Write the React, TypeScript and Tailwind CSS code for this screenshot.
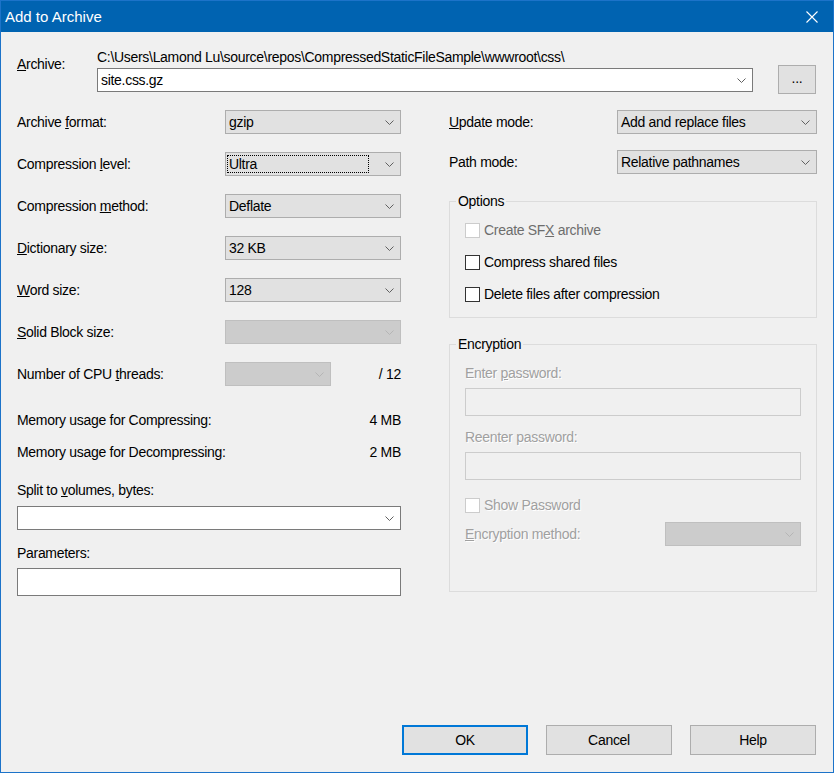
type ComboVariant = "normal" | "edit" | "disabled";

function Chevron({ color = "#606060" }: { color?: string }) {
  return (
    <svg width="9" height="5" viewBox="0 0 9 5" className="shrink-0">
      <polyline points="0.5,0.5 4.5,4.5 8.5,0.5" fill="none" stroke={color} strokeWidth="1" />
    </svg>
  );
}

function Combo({
  value = "",
  className = "",
  variant = "normal",
  focused = false,
}: {
  value?: string;
  className?: string;
  variant?: ComboVariant;
  focused?: boolean;
}) {
  const look =
    variant === "edit"
      ? "bg-white border-[#7a7a7a]"
      : variant === "disabled"
        ? "bg-[#cccccc] border-[#bfbfbf]"
        : "bg-[#e1e1e1] border-[#adadad]";
  return (
    <div className={`h-[24px] border flex items-center pr-[6px] ${look} ${className}`}>
      {focused ? (
        <div className="flex-1 h-[18px] ml-[1px] mr-[16px] border border-dotted border-black pl-[1px] flex items-center">
          {value}
        </div>
      ) : (
        <div className="flex-1 pl-[3px] truncate">{value}</div>
      )}
      <Chevron color={variant === "disabled" ? "#b5b5b5" : "#606060"} />
    </div>
  );
}

function Checkbox({ label, disabled = false }: { label: React.ReactNode; disabled?: boolean }) {
  return (
    <div className="h-[16px] flex items-center">
      <div
        className={`w-[15px] h-[15px] bg-white border ${disabled ? "border-[#cccccc]" : "border-[#333333]"}`}
      />
      <span className="ml-[4px]">{label}</span>
    </div>
  );
}

function Row({ label, children }: { label: React.ReactNode; children: React.ReactNode }) {
  return (
    <div className="h-[24px] flex items-center">
      <div className="w-[208px]">{label}</div>
      {children}
    </div>
  );
}

export default function App() {
  const dim = "text-[#a0a0a0] [text-shadow:1px_1px_0_#ffffff]";
  return (
    <div className="w-[834px] h-[773px] flex flex-col border border-[#1c73c9] bg-[#f0f0f0] text-black text-[14px] leading-[16px] tracking-[-0.3px] font-['Liberation_Sans',Arial,sans-serif]">
      {/* title bar */}
      <div className="h-[31px] shrink-0 bg-[#0063b1] flex items-center pl-[4px] pr-[15px] text-white">
        <span className="text-[15px] tracking-normal">Add to Archive</span>
        <svg width="12" height="12" viewBox="0 0 12 12" className="ml-auto">
          <path d="M0.5 0.5 L11.5 11.5 M11.5 0.5 L0.5 11.5" stroke="#ffffff" strokeWidth="1.1" />
        </svg>
      </div>

      <div className="flex-1 flex flex-col px-[16px] pt-[17px] pb-[17px]">
        {/* archive */}
        <div className="flex">
          <div className="w-[80px] mt-[7px]">
            <u>A</u>rchive:
          </div>
          <div className="w-[656px] flex flex-col">
            <div>C:\Users\Lamond Lu\source\repos\CompressedStaticFileSample\wwwroot\css\</div>
            <Combo variant="edit" value="site.css.gz" className="mt-[3px]" />
          </div>
          <button className="ml-[25px] mt-[16px] w-[38px] h-[29px] bg-[#e1e1e1] border border-[#adadad] flex items-center justify-center pb-[3px]">
            ...
          </button>
        </div>

        <div className="flex mt-[16px]">
          {/* left column */}
          <div className="w-[384px] flex flex-col">
            <div className="flex flex-col gap-[18px]">
              <Row label={<>Archive <u>f</u>ormat:</>}>
                <Combo value="gzip" className="w-[176px]" />
              </Row>
              <Row label={<>Compression <u>l</u>evel:</>}>
                <Combo value="Ultra" focused className="w-[176px]" />
              </Row>
              <Row label={<>Compression <u>m</u>ethod:</>}>
                <Combo value="Deflate" className="w-[176px]" />
              </Row>
              <Row label={<><u>D</u>ictionary size:</>}>
                <Combo value="32 KB" className="w-[176px]" />
              </Row>
              <Row label={<><u>W</u>ord size:</>}>
                <Combo value="128" className="w-[176px]" />
              </Row>
              <Row label={<><u>S</u>olid Block size:</>}>
                <Combo variant="disabled" className="w-[176px]" />
              </Row>
              <Row label={<>Number of CPU <u>t</u>hreads:</>}>
                <Combo variant="disabled" className="w-[106px]" />
                <span className="ml-auto">/ 12</span>
              </Row>
            </div>
            <div className="mt-[26px] flex justify-between">
              <span>Memory usage for Compressing:</span>
              <span>4 MB</span>
            </div>
            <div className="mt-[16px] flex justify-between">
              <span>Memory usage for Decompressing:</span>
              <span>2 MB</span>
            </div>
            <div className="mt-[22px]">
              Split to <u>v</u>olumes, bytes:
            </div>
            <Combo variant="edit" className="mt-[8px]" />
            <div className="mt-[15px]">Parameters:</div>
            <div className="mt-[7px] h-[28px] bg-white border border-[#7a7a7a]" />
          </div>

          {/* right column */}
          <div className="w-[368px] ml-[48px] flex flex-col">
            <div className="h-[24px] flex items-center">
              <div className="w-[168px]">
                <u>U</u>pdate mode:
              </div>
              <Combo value="Add and replace files" className="w-[200px]" />
            </div>
            <div className="h-[24px] flex items-center mt-[16px]">
              <div className="w-[168px]">Path mode:</div>
              <Combo value="Relative pathnames" className="w-[200px]" />
            </div>

            <fieldset className="mt-[19px] border border-[#dcdcdc] pl-[15px] pr-[15px] pb-[15px]">
              <legend className="-ml-[9px] px-[2px] leading-[16px]">Options</legend>
              <div className="pt-[13px] flex flex-col gap-[16px]">
                <div className="text-[#6d6d6d]">
                  <Checkbox disabled label={<>Create SF<u>X</u> archive</>} />
                </div>
                <Checkbox label="Compress shared files" />
                <Checkbox label="Delete files after compression" />
              </div>
            </fieldset>

            <fieldset className="mt-[18px] border border-[#dcdcdc] pl-[15px] pr-[15px] pb-[45px]">
              <legend className="-ml-[9px] px-[2px] leading-[16px]">Encryption</legend>
              <div className="pt-[13px] flex flex-col">
                <div className={dim}>
                  Enter <u>p</u>assword:
                </div>
                <div className="mt-[7px] h-[28px] border border-[#cccccc]" />
                <div className={`mt-[13px] ${dim}`}>Reenter password:</div>
                <div className="mt-[7px] h-[28px] border border-[#cccccc]" />
                <div className={`mt-[17px] ${dim}`}>
                  <Checkbox disabled label="Show Password" />
                </div>
                <div className="mt-[9px] h-[24px] flex items-center">
                  <div className={`w-[200px] ${dim}`}>
                    <u>E</u>ncryption method:
                  </div>
                  <Combo variant="disabled" className="w-[136px]" />
                </div>
              </div>
            </fieldset>
          </div>
        </div>

        {/* buttons */}
        <div className="mt-auto mr-[1px] flex justify-end gap-[18px]">
          <button className="w-[126px] h-[30px] bg-[#e1e1e1] border-2 border-[#0078d7]">OK</button>
          <button className="w-[126px] h-[30px] bg-[#e1e1e1] border border-[#adadad]">Cancel</button>
          <button className="w-[126px] h-[30px] bg-[#e1e1e1] border border-[#adadad]">Help</button>
        </div>
      </div>
    </div>
  );
}
